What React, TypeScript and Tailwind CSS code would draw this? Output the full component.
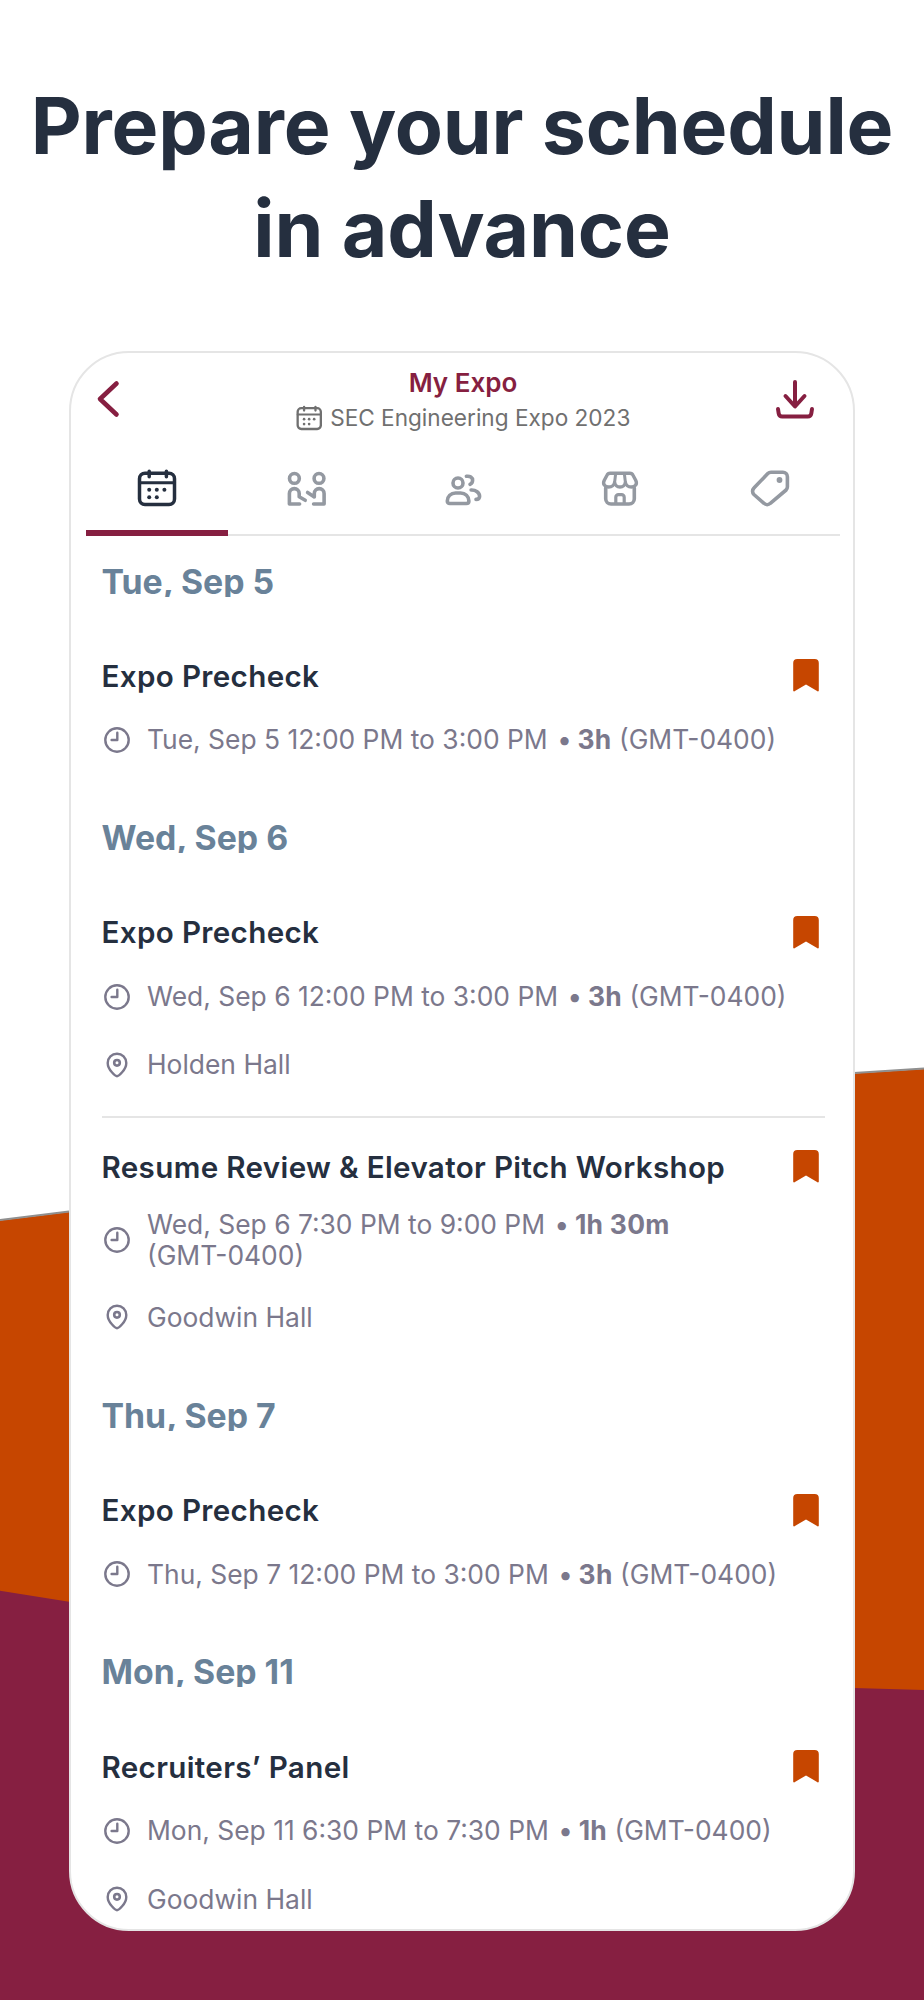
import type { ReactNode } from "react";

type Session = {
  title: string;
  time: string;
  duration: string;
  place?: string;
};

type Day = {
  label: string;
  sessions: Session[];
};

const days: Day[] = [
  {
    label: "Tue, Sep 5",
    sessions: [{ title: "Expo Precheck", time: "Tue, Sep 5 12:00 PM to 3:00 PM", duration: "3h" }]
  },
  {
    label: "Wed, Sep 6",
    sessions: [
      {
        title: "Expo Precheck",
        time: "Wed, Sep 6 12:00 PM to 3:00 PM",
        duration: "3h",
        place: "Holden Hall"
      },
      {
        title: "Resume Review & Elevator Pitch Workshop",
        time: "Wed, Sep 6 7:30 PM to 9:00 PM",
        duration: "1h 30m",
        place: "Goodwin Hall"
      }
    ]
  },
  {
    label: "Thu, Sep 7",
    sessions: [{ title: "Expo Precheck", time: "Thu, Sep 7 12:00 PM to 3:00 PM", duration: "3h" }]
  },
  {
    label: "Mon, Sep 11",
    sessions: [
      {
        title: "Recruiters’ Panel",
        time: "Mon, Sep 11 6:30 PM to 7:30 PM",
        duration: "1h",
        place: "Goodwin Hall"
      }
    ]
  }
];

function CalendarIcon({ className }: { className: string }) {
  return (
    <svg viewBox="0 0 40 38" fill="none" stroke="currentColor" strokeWidth={3.5} strokeLinecap="round" className={className}>
      <rect x="2.5" y="4.2" width="35" height="31.4" rx="5.5" />
      <path d="M2.5 13.8h35" strokeWidth={3} />
      <path d="M12.2 2.2v5.5M29.4 2.2v5.5" />
      <g fill="currentColor" stroke="none">
        <circle cx="12.2" cy="20.8" r="2" />
        <circle cx="19.8" cy="20.8" r="2" />
        <circle cx="27.4" cy="20.8" r="2" />
        <circle cx="12.2" cy="28.2" r="2" />
        <circle cx="19.8" cy="28.2" r="2" />
      </g>
    </svg>
  );
}

function TabIcon({ children }: { children: ReactNode }) {
  return (
    <svg
      viewBox="0 0 40 38"
      fill="none"
      stroke="currentColor"
      strokeWidth={3.6}
      strokeLinecap="round"
      strokeLinejoin="round"
      className="h-[38px] w-10 text-[#9499a1]"
    >
      {children}
    </svg>
  );
}

function MeetingIcon() {
  return (
    <TabIcon>
      <circle cx="7.4" cy="9.4" r="4.9" />
      <circle cx="32" cy="9.4" r="4.9" />
      <path d="M12.6 35H2.400V24.5a4.9 4.9 0 0 1 9.800 0v3.300l6 3.500" />
      <path d="M26.600 35h10.500V24.500a4.900 4.900 0 0 0-9.800 0v3.400l-6.700-4.400" />
    </TabIcon>
  );
}

function PeopleIcon() {
  return (
    <TabIcon>
      <circle cx="15" cy="14" r="5" />
      <path d="M4.300 32c0-4.800 3.600-8 8.300-8h5c4.700 0 8.300 3.200 8.300 8 0 1.500-.8 2.500-2.500 2.500H6.800c-1.700 0-2.500-1-2.500-2.500z" />
      <path d="M23.400 7.300c3.600-.6 6.200 1.300 6.200 4 0 2-1 3.300-2.600 4M28.100 21c4.700-.2 8.500 2.600 8.500 6.200 0 2-1.300 3.200-3.600 3.200" />
    </TabIcon>
  );
}

function StoreIcon() {
  return (
    <TabIcon>
      <path
        d="M10.200 4.200h19.600c1.600 0 2.600.6 3.200 2l2.700 5c2 4-.6 6.800-4.200 6.800-3.200 0-5.500-1.800-6.100-4.500-.6 2.700-2.700 4.500-5.400 4.500s-4.800-1.800-5.400-4.500c-.6 2.700-2.900 4.500-6.100 4.500-3.600 0-6.200-2.800-4.200-6.800l2.700-5c.6-1.400 1.600-2 3.200-2z"
        strokeWidth={3.4}
      />
      <path d="M15.600 5l-1 8.500M24.400 5l1 8.500" strokeWidth={3} />
      <path d="M5.700 19v10.700a5.300 5.300 0 0 0 5.300 5.300h18a5.300 5.300 0 0 0 5.300-5.300V19" />
      <path d="M15.800 34.500v-6.300a2.600 2.600 0 0 1 2.600-2.600h3.200a2.600 2.600 0 0 1 2.600 2.600v6.300" strokeWidth={3.2} />
    </TabIcon>
  );
}

function TagIcon() {
  return (
    <TabIcon>
      <path d="M21 3.200h11.900a4.500 4.500 0 0 1 4.500 4.500v10.100a4.500 4.500 0 0 1-1.300 3.200L20.300 34.300a4.500 4.500 0 0 1-6.300 0L3.900 25.500a4.500 4.500 0 0 1 0-6.400L17.800 4.500A4.500 4.500 0 0 1 21 3.200z" />
      <circle cx="29.500" cy="11" r="2.900" fill="currentColor" stroke="none" />
    </TabIcon>
  );
}

function ClockIcon() {
  return (
    <svg viewBox="0 0 26 26" fill="none" stroke="currentColor" strokeWidth={2.4} strokeLinecap="round" strokeLinejoin="round" className="size-[26px] shrink-0">
      <circle cx="13" cy="13" r="11.7" />
      <path d="M13.300 5.700v7.300H7.600" />
    </svg>
  );
}

function PinIcon() {
  return (
    <svg viewBox="0 0 26 26" fill="none" stroke="currentColor" strokeWidth={2.4} strokeLinejoin="round" className="size-[26px] shrink-0">
      <path d="M13 24.300c-1.200 0-9.300-6.200-9.300-13.300a9.300 9.300 0 0 1 18.600 0c0 7.100-8.100 13.300-9.300 13.300z" />
      <circle cx="13" cy="10.800" r="2.800" strokeWidth={2.600} />
    </svg>
  );
}

function BookmarkIcon() {
  return (
    <svg viewBox="0 0 26 33" className="h-[33px] w-[26px] shrink-0 fill-[#c64600]">
      <path d="M4.300 0h17.400A4.100 4.100 0 0 1 25.800 4.100V31.500a.8.8 0 0 1-1.300.7L13 25.400 1.500 32.200a.8.8 0 0 1-1.300-.7V4.100A4.100 4.100 0 0 1 4.300 0z" />
    </svg>
  );
}

function Row({ icon, children }: { icon: ReactNode; children: ReactNode }) {
  return (
    <div className="flex min-h-11 items-center gap-[17.5px] pl-0.5 text-[26.4px] leading-[31px] text-[#7b788c]">
      {icon}
      <p>{children}</p>
    </div>
  );
}

function SessionItem({ session }: { session: Session }) {
  return (
    <article>
      <div className="flex h-[60px] items-center justify-between pr-1.5">
        <h3 className="text-[29.6px] font-semibold tracking-[0.34px] text-[#252f3f]">{session.title}</h3>
        <BookmarkIcon />
      </div>
      <div className="mt-3 flex flex-col gap-[24.4px]">
        <Row icon={<ClockIcon />}>
          {session.time} <strong className="ml-[3px] font-bold tracking-[0.3px]">• {session.duration}</strong>{" "}
          <span className="whitespace-nowrap">(GMT-0400)</span>
        </Row>
        {session.place && <Row icon={<PinIcon />}>{session.place}</Row>}
      </div>
    </article>
  );
}

function Backdrop() {
  return (
    <svg viewBox="0 0 924 2000" className="absolute inset-0 h-[2000px] w-[924px]">
      <path d="M0 1220.500L69 1212 854 1073.500 924 1069V2000H0z" fill="#c64600" />
      <path d="M0 1220L69 1211.500M854 1073L924 1068.500" stroke="#8f8f8f" strokeWidth={2} />
      <path d="M0 1590.700L69 1601.700 854 1688 924 1690V2000H0z" fill="#861f41" />
    </svg>
  );
}

export default function App() {
  return (
    <main className="relative h-[2000px] w-[924px] overflow-hidden bg-white font-['Inter',sans-serif]">
      <Backdrop />
      <div className="relative flex flex-col items-center">
        <h1 className="mt-[74px] text-center text-[78.7px] leading-[103px] font-bold tracking-[-0.2px] whitespace-nowrap text-[#252f3f]">
          Prepare your schedule
          <br />
          in advance
        </h1>

        <section className="mt-[71px] h-[1580px] w-[786px] overflow-hidden rounded-[60px] border-2 border-[#e5e5e5] bg-white">
          <header className="grid h-[102px] grid-cols-[55px_1fr_40px] pt-[13px] pr-[38px] pl-[25px]">
            <svg viewBox="0 0 24 38" fill="none" strokeWidth={4.6} strokeLinecap="round" strokeLinejoin="round" className="mt-[14px] h-[38px] w-6 stroke-[#861f41]">
              <path d="M20.500 3.500L4 19 20.500 34.500" />
            </svg>
            <div className="flex flex-col items-center">
              <h2 className="text-[26px] leading-[34px] font-semibold text-[#861f41]">My Expo</h2>
              <p className="flex items-center gap-2 text-[22.6px] leading-[36px] text-[#707070]">
                <CalendarIcon className="h-[26px] w-[26.5px]" />
                SEC Engineering Expo 2023
              </p>
            </div>
            <svg viewBox="0 0 40 40" fill="none" strokeWidth={4} strokeLinecap="round" strokeLinejoin="round" className="mt-[13px] size-10 stroke-[#861f41]">
              <path d="M20 3v24M10.500 17L20 27.500 29.500 17" />
              <path d="M3 30l.7 4.500c.3 1.800 1.600 3 3.500 3h25.600c1.900 0 3.200-1.200 3.500-3L37 30" />
            </svg>
          </header>

          <nav className="mr-[13px] ml-[15px] grid h-[81px] grid-cols-[142px_157px_156px_158px_141px] justify-items-center border-b-2 border-[#e5e5e5] pt-[13.5px]">
            <div className="-mb-0.5 flex w-full flex-col items-center justify-between">
              <CalendarIcon className="h-[38px] w-10 text-[#252f3f]" />
              <span className="h-1.5 w-full bg-[#861f41]" />
            </div>
            <MeetingIcon />
            <PeopleIcon />
            <StoreIcon />
            <TagIcon />
          </nav>

          <div className="mr-[28px] ml-[30.5px] flex flex-col gap-[61.4px] pt-[30.6px]">
            {days.map((day) => (
              <section key={day.label}>
                {/* line box is tight enough to cut the descenders */}
                <h2 className="mb-[49.3px] h-[30px] overflow-hidden text-[33.8px] leading-[30px] font-bold text-[#698299]">
                  {day.label}
                </h2>
                <div className="divide-y-2 divide-[#e5e5e5]">
                  {day.sessions.map((session) => (
                    <div key={session.title} className="not-first:pt-[18.6px] not-last:pb-[29.4px]">
                      <SessionItem session={session} />
                    </div>
                  ))}
                </div>
              </section>
            ))}
          </div>
        </section>
      </div>
    </main>
  );
}
